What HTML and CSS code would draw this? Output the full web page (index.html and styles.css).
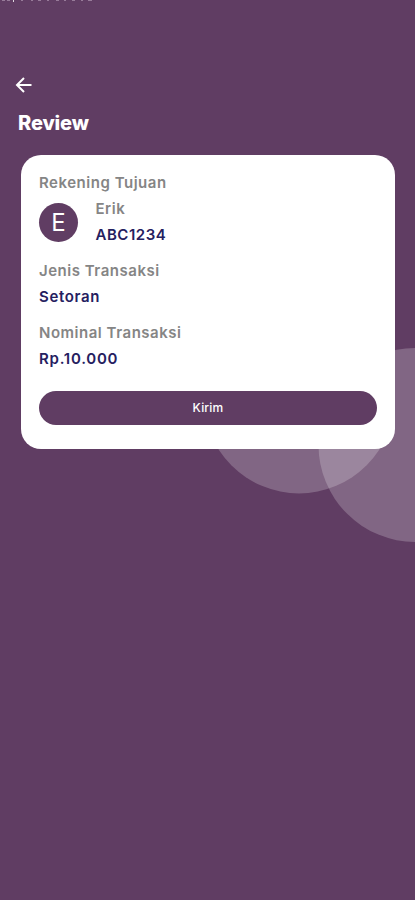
FILE: index.html
```html
<!DOCTYPE html>
<html lang="id">
<head>
<meta charset="utf-8">
<meta name="viewport" content="width=device-width, initial-scale=1">
<title>Review</title>
<link rel="stylesheet" href="styles.css">
</head>
<body>
<main class="screen">
  <svg class="backdrop" viewBox="0 0 415 900" aria-hidden="true">
    <circle cx="299" cy="397.7" r="95.7"/>
    <circle cx="415.5" cy="445" r="97"/>
  </svg>
  <svg class="status" viewBox="0 0 100 3" aria-hidden="true">
    <path d="M2 .5h3M7 .5h3M21 .5h2M31 .5h2M38 .5h3M47 .5h2M56 .5h3M64 .5h2M72 .5h3M81 .5h2M88 .5h4"/>
    <path class="bright" d="M13.5 0v2"/>
  </svg>
  <header class="header">
    <svg class="back" viewBox="0 0 18 18"><path d="M16.5 9H2.5M9 2L2 9l7 7"/></svg>
    <h1 class="title">Review</h1>
  </header>
  <section class="card">
    <h2 class="label">Rekening Tujuan</h2>
    <div class="recipient">
      <div class="avatar">E</div>
      <div class="account">
        <p class="label">Erik</p>
        <p class="value">ABC1234</p>
      </div>
    </div>
    <div class="field">
      <p class="label">Jenis Transaksi</p>
      <p class="value setoran">Setoran</p>
    </div>
    <div class="field">
      <p class="label">Nominal Transaksi</p>
      <p class="value amount">Rp.10.000</p>
    </div>
    <button class="send">Kirim</button>
  </section>
</main>
</body>
</html>
```
FILE: styles.css
```css
* { box-sizing: border-box; margin: 0; padding: 0; }
body { background: #603d63; font-family: Inter, sans-serif; }
.screen { position: relative; width: 415px; height: 900px; overflow: hidden; background: #603d63; }
.backdrop { position: absolute; left: 0; top: 0; width: 415px; height: 900px; fill: #fff; fill-opacity: .21; }
.status { display: block; width: 100px; height: 3px; stroke: #a58ba7; stroke-width: 1; opacity: .8; }
.status .bright { stroke: #fff; }
.header { height: 152.4px; padding: 72.5px 0 0 15px; }
.back { display: block; width: 18px; height: 18px; fill: none; stroke: #fff; stroke-width: 2; }
.title { margin: 16.5px 0 0 3px; color: #fff; font-size: 20px; font-weight: 800; line-height: 26px; letter-spacing: -.15px; }
.card { position: relative; width: 373.2px; height: 293.2px; margin-left: 21.4px; padding: 14.6px 17.6px 0; border-radius: 20px; background: #fff; }
.label, .value { height: 26px; font-size: 15px; line-height: 26px; font-weight: 600; letter-spacing: .52px; white-space: nowrap; }
.label { color: #858585; }
.value { color: #25205f; }
.setoran { letter-spacing: .65px; }
.amount { letter-spacing: .75px; }
.recipient { display: flex; gap: 17.5px; height: 52px; }
.avatar { width: 39px; height: 39px; margin-top: 6.6px; border-radius: 50%; background: #603d63; color: #fff; font-size: 24px; line-height: 39px; text-align: center; }
.field { height: 52px; margin-top: 10px; }
.send { display: block; width: 338px; height: 34px; margin-top: 19px; padding-bottom: 1px; border: 0; border-radius: 17px; background: #603d63; color: #fff; font: 500 12px Inter, sans-serif; letter-spacing: .2px; }
```
